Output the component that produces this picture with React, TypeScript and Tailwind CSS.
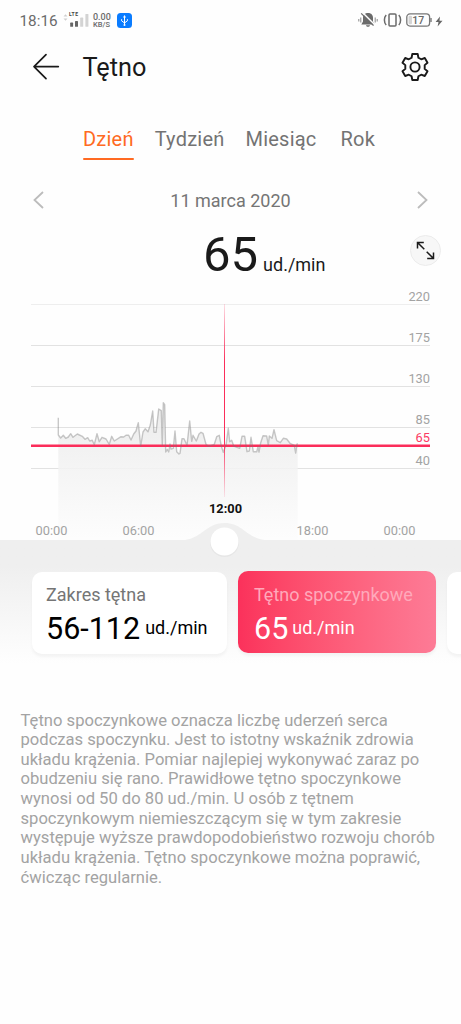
import { useState } from "react";

const tabs = ["Dzień", "Tydzień", "Miesiąc", "Rok"];

const gridLines = [
  { label: "220", y: 304.5 },
  { label: "175", y: 345.5 },
  { label: "130", y: 386.5 },
  { label: "85", y: 427.5 },
  { label: "40", y: 468.5 },
];

const hours = [
  { label: "00:00", x: 51.5 },
  { label: "06:00", x: 138.5 },
  { label: "18:00", x: 312.5 },
  { label: "00:00", x: 399.5 },
];

const pulse =
  "58.3,417.7 58.3,435 60.7,438 63.3,435.3 65.7,438.3 68.3,437 70.7,433.7 73,437.3 77.3,434 82.3,436.3 85,439.3 87.7,437.7 89.7,441 92.3,440.3 94.3,444.7 97,433.7 99.3,441.7 102,437.3 106,439 109.3,444.3 111.7,436.3 114.3,441 121,436.7 123.7,437 126,435.3 128.7,435.3 131,440 133.7,434 136,431 138.3,422.7 140.7,446 143,432 145.3,428.7 148,431.7 150.3,425 152.7,411 154,432.3 156,432.3 158.7,409 161.3,410.7 162.3,445.3 163.3,402.7 164.7,404.7 165.7,452 167.3,449.3 168.7,452 170,444 171,449 173.3,448.3 175,431 176.7,451.7 179,454 180,453.3 182,438.7 184,438.7 187,445.3 189.7,421 191.7,441.3 193,435.3 196.3,441 199,434 201,432.3 203,433.3 206,444.3 208.3,446.3 214.3,444.3 216.7,436.7 219.3,435.3 221.3,446 223.3,452.3 226,445.3 228.3,428.3 229.7,441.7 231.7,440.3 233.7,446 239.7,448.3 242,436.3 244.7,436.3 247,451.7 249.3,451 251,437.3 253.3,451.7 256.7,451.7 258,446.7 259,452 260.7,442.7 263,435.7 266.7,436 268.3,445.3 269.3,436 272,438.3 274,429.7 276.7,440.7 280.3,442.7 283.3,438.3 286.7,439 290,443.3 294.3,445.3 295.7,453 297,444 297.7,443.5";

function StatusBar() {
  return (
    <div className="flex h-10 items-center pt-[2px] text-[#6b6b6b]">
      <span className="ml-[19.5px] w-[43.5px] pt-px text-[15.3px]">18:16</span>
      <svg width="26" height="18" viewBox="0 0 26 18" className="-mt-1">
        <path d="M0.5 6.5 2.5 4.2 4.5 6.5ZM0.5 8.5 2.5 10.8 4.5 8.5Z" fill="#cfcfcf" />
        <text x="6" y="5.5" fontSize="5" fontWeight="700" fill="#444" textLength="9">LTE</text>
        <rect x="7.2" y="12.6" width="2.9" height="4.2" rx="0.6" fill="#666" />
        <rect x="12" y="11" width="3" height="5.8" rx="0.6" fill="#666" />
        <rect x="17.2" y="7.6" width="3" height="9.2" rx="0.6" fill="#d3d3d3" />
        <rect x="22.4" y="4" width="3" height="12.8" rx="0.6" fill="#d3d3d3" />
      </svg>
      <div className="ml-[4px] w-[19px] text-[7.5px] leading-[7px] font-medium whitespace-nowrap">
        <div className="text-[9px]">0.00</div>
        <div>KB/S</div>
      </div>
      <svg width="15" height="15" viewBox="0 0 15 15" className="-mt-[1px] ml-[5px]">
        <rect width="15" height="15" rx="3.5" fill="#0a7cff" />
        <path d="M7.5 12V3.4M4.6 6.2v1.6l2.9 2.2 2.9-2.2V6.2" fill="none" stroke="#fff" strokeWidth="1" />
        <path d="M7.5 2 9 4.6H6Z" fill="#fff" />
        <circle cx="7.5" cy="12" r="1" fill="#fff" />
      </svg>
      <svg width="20" height="16" viewBox="0 0 20 16" className="-mt-[2px] ml-auto">
        <path d="M10 1c-3.5 0-5 2.2-5 4.8v3.7L3.3 12.5h13.4L15 9.5V5.8C15 3.2 13.5 1 10 1ZM8 13.2h4c-.4 2.2-3.6 2.2-4 0Z" fill="#6b6b6b" />
        <path d="M4.5 0.5 17.5 13.5" stroke="#fefefe" strokeWidth="1.5" />
        <path d="M3.2 1.3 15.5 13.6" stroke="#6b6b6b" strokeWidth="1.2" />
        <path d="M0.8 7v2.5M2.8 5.5v5M17.2 5.5v5M19.2 7v2.5" stroke="#888" strokeWidth="1" />
      </svg>
      <svg width="19" height="16" viewBox="0 0 19 16" className="-mt-[2px] ml-[5px]">
        <rect x="6" y="2" width="7" height="12" rx="1" fill="none" stroke="#6b6b6b" strokeWidth="1.5" />
        <path d="M3.2 3C.8 5.5.8 10.5 3.2 13M15.8 3c2.4 2.5 2.4 7.5 0 10" fill="none" stroke="#6b6b6b" strokeWidth="1.5" />
      </svg>
      <svg width="26" height="14" viewBox="0 0 26 14" className="-mt-[2px] ml-[4px]">
        <rect x="0.8" y="0.9" width="22.8" height="12.2" rx="3.2" fill="none" stroke="#777" strokeWidth="1.3" />
        <rect x="2.5" y="2.8" width="3.5" height="8.4" rx="1.2" fill="#d5d5d5" />
        <path d="M25 5v4" stroke="#777" strokeWidth="1.4" />
        <text x="12.3" y="10.7" fontSize="10.5" fontWeight="500" fill="#666" textAnchor="middle">17</text>
      </svg>
      <svg width="8" height="11" viewBox="0 0 8 11" className="mr-[18px] ml-[3px]">
        <path d="M5 0.5.6 6h2.9L2.6 10.5 7.5 4.8H4.5Z" fill="#666" />
      </svg>
    </div>
  );
}

function Chart() {
  return (
    <svg viewBox="0 290 461 250" className="relative z-10 block h-[250px] w-[461px] overflow-visible">
      <defs>
        <linearGradient id="area" x1="0" y1="400" x2="0" y2="540" gradientUnits="userSpaceOnUse">
          <stop offset="0" stopColor="#e8e8e8" />
          <stop offset="0.5" stopColor="#f3f3f3" />
          <stop offset="1" stopColor="#fdfdfd" />
        </linearGradient>
        <linearGradient id="cursor" x1="0" y1="304" x2="0" y2="497" gradientUnits="userSpaceOnUse">
          <stop offset="0" stopColor="#fb2d5a" stopOpacity="0.15" />
          <stop offset="0.3" stopColor="#fb2d5a" />
          <stop offset="0.7" stopColor="#fb2d5a" />
          <stop offset="1" stopColor="#fb2d5a" stopOpacity="0.1" />
        </linearGradient>
      </defs>

      {gridLines.map((line) => (
        <g key={line.label}>
          <path d={`M31 ${line.y}H430`} stroke={line.label === "220" ? "#eeeeee" : "#e2e2e2"} />
          <text x="430" y={line.y - 3.5} textAnchor="end" fontSize="12.8" fill="#a3a3a3">{line.label}</text>
        </g>
      ))}

      <polygon points={`58.3,540 ${pulse} 297.7,540`} fill="url(#area)" fillOpacity="0.85" />
      <path d="M31 445.8H430" stroke="#fb2d5a" strokeWidth="2.4" />
      <polyline points={pulse} fill="none" stroke="#777" strokeOpacity="0.4" strokeWidth="1.4" strokeLinejoin="round" />
      <text x="430" y="442" textAnchor="end" fontSize="12.8" fill="#fb3a63">65</text>
      <rect x="224" y="304" width="1" height="193" fill="url(#cursor)" />

      {hours.map((hour) => (
        <text key={hour.x} x={hour.x} y="534.5" textAnchor="middle" fontSize="12.8" fill="#a3a3a3">{hour.label}</text>
      ))}
      <text x="225.5" y="513.3" textAnchor="middle" fontSize="12.8" fontWeight="700" fill="#111">12:00</text>

      {/* handle under the cursor */}
      <path d="M180 540.5C202 540 205 523 224.5 523S247 540 269 540.5Z" fill="#efefef" />
      <circle cx="224.5" cy="542.5" r="14.5" fill="#e6e6e6" />
      <circle cx="224.5" cy="541.5" r="14" fill="#fff" />
    </svg>
  );
}

export default function App() {
  const [active, setActive] = useState("Dzień");

  return (
    <main className="h-[1024px] w-[461px] overflow-hidden bg-[#fefefe] font-[Roboto,sans-serif] text-[#1a1a1a]">
      <StatusBar />

      <header className="flex h-[54px] items-center">
        <svg width="28" height="28" viewBox="0 0 28 28" className="ml-8" fill="none" stroke="#1a1a1a" strokeWidth="1.7" strokeLinecap="round" strokeLinejoin="round">
          <path d="M26.3 13.6H2M14 1.6 2 13.6l12 12" />
        </svg>
        <h1 className="mt-[2px] ml-[22.5px] text-[25.3px] leading-8">Tętno</h1>
        <svg width="30" height="30" viewBox="0 0 30 30" className="mr-[31px] ml-auto" fill="none" stroke="#1a1a1a" strokeWidth="1.9" strokeLinejoin="round">
          <path d="M12.3 2h5.4l.7 3.7 2.8 1.6 3.6-1.3 2.7 4.7-2.8 2.4v3.8l2.8 2.4-2.7 4.7-3.6-1.3-2.8 1.6-.7 3.7h-5.4l-.7-3.7-2.8-1.6L5.2 24l-2.7-4.7 2.8-2.4v-3.8l-2.8-2.4L5.2 6l3.6 1.3 2.8-1.6Z" />
          <circle cx="15" cy="15" r="4.6" />
        </svg>
      </header>

      <nav className="flex h-[66px] items-start gap-[21px] pt-[31px] pl-[83px] text-[20px] leading-7 tracking-[0.22px]">
        {tabs.map((tab) => (
          <button
            key={tab}
            onClick={() => setActive(tab)}
            className={
              tab === active
                ? "flex h-[35px] flex-col justify-between text-[#ff6a22]"
                : "flex h-[35px] flex-col text-[#737373] last:ml-[3px]"
            }
          >
            <span>{tab}</span>
            {tab === active && <span className="h-[2.5px] w-full rounded-full bg-[#ff6a22]" />}
          </button>
        ))}
      </nav>

      <div className="flex h-20 items-center justify-between px-8">
        <svg width="14" height="20" viewBox="0 0 14 20" fill="none" stroke="#bcbcbc" strokeWidth="1.8">
          <path d="M11 2 2.5 10 11 18" />
        </svg>
        <span className="text-[18px] text-[#757575]">11 marca 2020</span>
        <svg width="14" height="20" viewBox="0 0 14 20" fill="none" stroke="#bcbcbc" strokeWidth="1.8">
          <path d="M3 2 11.5 10 3 18" />
        </svg>
      </div>

      <div className="-mt-[10px] flex h-[60px] items-start">
        <div className="ml-[203px] flex w-[207px] items-baseline pt-px">
          <span className="text-[49px] leading-[48px]">65</span>
          <span className="ml-[5px] text-[18px]">ud./min</span>
        </div>
        <button className="mt-[5px] flex size-[31px] items-center justify-center rounded-full border border-[#ececec] bg-[#f7f7f7]">
          <svg width="19" height="19" viewBox="0 0 19 19" fill="none" stroke="#1a1a1a" strokeWidth="1.5">
            <path d="M8.3 8.3 1.5 1.5M1.5 7.5V1.5H7.8M10.7 10.7l6.8 6.8M17.5 11.5v6H11.2" />
          </svg>
        </button>
      </div>

      <Chart />

      <section className="flex h-[130px] items-start gap-[11px] bg-gradient-to-b from-[#efefef] from-20% to-[#fefefe] to-95% pt-8 pl-8">
        <div className="h-[82px] w-[195px] shrink-0 rounded-[10px] bg-white pt-[11px] pl-[14px] shadow-[0_3px_3px_rgba(0,0,0,0.04)]">
          <div className="text-[18px] leading-6 text-[#757575]">Zakres tętna</div>
          <div className="flex items-start text-black">
            <span className="text-[30.5px] leading-[43px]">56-112</span>
            <span className="ml-[5px] text-[18px] leading-[41px]">ud./min</span>
          </div>
        </div>
        <div className="-mt-px h-[82px] w-[197.5px] shrink-0 rounded-[10px] bg-gradient-to-r from-[#fb315b] to-[#fd7b96] pt-3 pl-4 text-white shadow-[0_3px_3px_rgba(0,0,0,0.04)]">
          <div className="text-[18px] leading-6 text-[#ffa9bb]">Tętno spoczynkowe</div>
          <div className="flex items-start">
            <span className="text-[30.5px] leading-[43px]">65</span>
            <span className="ml-[4px] text-[18px] leading-[41px]">ud./min</span>
          </div>
        </div>
        <div className="h-[82px] w-[195px] shrink-0 rounded-[10px] bg-white shadow-[0_3px_3px_rgba(0,0,0,0.04)]" />
      </section>

      <p className="pt-[40.5px] pl-[20.5px] text-[16.6px] leading-[19.65px] whitespace-nowrap text-[#a3a3a3]">
        Tętno spoczynkowe oznacza liczbę uderzeń serca<br />
        podczas spoczynku. Jest to istotny wskaźnik zdrowia<br />
        układu krążenia. Pomiar najlepiej wykonywać zaraz po<br />
        obudzeniu się rano. Prawidłowe tętno spoczynkowe<br />
        wynosi od 50 do 80 ud./min. U osób z tętnem<br />
        spoczynkowym niemieszczącym się w tym zakresie<br />
        występuje wyższe prawdopodobieństwo rozwoju chorób<br />
        układu krążenia. Tętno spoczynkowe można poprawić,<br />
        ćwicząc regularnie.
      </p>
    </main>
  );
}
